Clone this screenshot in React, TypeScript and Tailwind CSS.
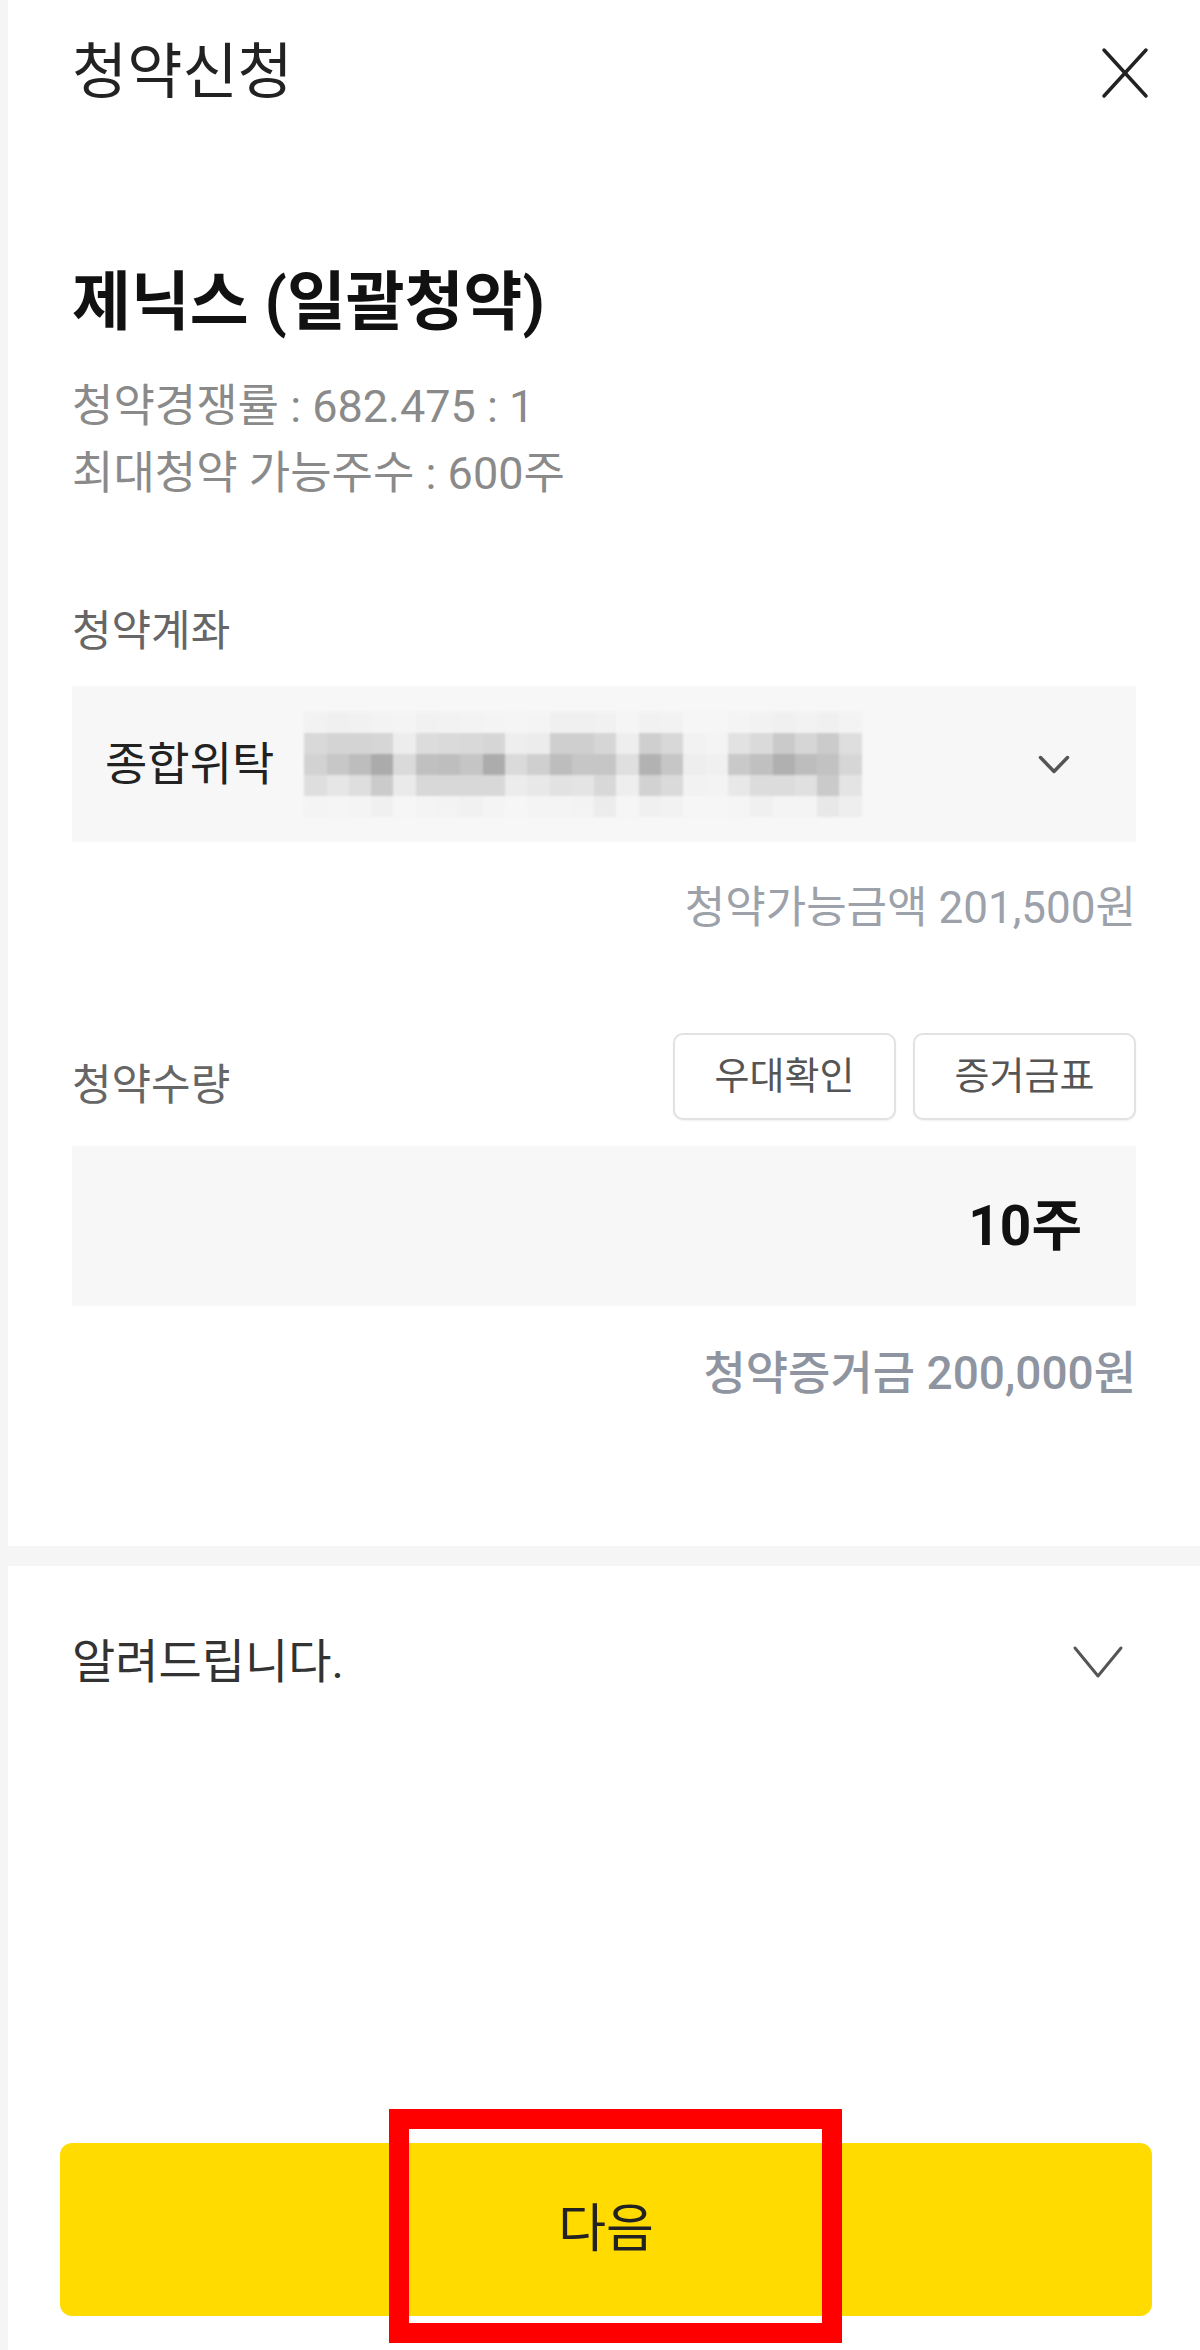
import React from "react";

// pixelated (masked) account number, gray levels per cell
const maskRows: number[][] = [
  [242, 240, 241, 243, 244, 241, 242, 243, 244, 245, 244, 240, 240, 241, 245, 241, 242, 246, 246, 244, 242, 240, 242, 240, 243],
  [217, 212, 212, 214, 237, 220, 218, 217, 214, 238, 236, 207, 207, 214, 238, 207, 216, 242, 244, 226, 218, 202, 214, 203, 222],
  [210, 199, 189, 171, 218, 192, 190, 197, 172, 218, 207, 189, 198, 198, 223, 178, 198, 238, 240, 201, 192, 176, 189, 194, 214],
  [222, 230, 222, 203, 234, 216, 216, 216, 216, 236, 232, 226, 228, 216, 238, 210, 218, 242, 243, 232, 220, 220, 224, 202, 228],
  [244, 245, 244, 240, 246, 244, 243, 241, 244, 246, 244, 244, 243, 236, 246, 240, 242, 246, 246, 245, 240, 244, 244, 232, 238],
];

const Chevron = ({ w, h, stroke }: { w: number; h: number; stroke: number }) => (
  <svg width={w} height={h} viewBox={`0 0 ${w} ${h}`} fill="none">
    <polyline
      points={`${stroke},${stroke} ${w / 2},${h - stroke} ${w - stroke},${stroke}`}
      stroke="#555"
      strokeWidth={stroke}
      strokeLinecap="round"
      strokeLinejoin="round"
    />
  </svg>
);

const MaskedAccount: React.FC = () => (
  <div className="flex flex-col blur-[1px]">
    {maskRows.map((row, i) => (
      <div key={i} className="flex">
        {row.map((g, j) => (
          <div
            key={j}
            className="w-[22.3px] h-[21px]"
            style={{ backgroundColor: `rgb(${g},${g},${g})` }}
          />
        ))}
      </div>
    ))}
  </div>
);

const App: React.FC = () => {
  return (
    <div className="relative w-[1200px] h-[2350px] flex bg-white font-['Roboto','Noto_Sans_CJK_KR',sans-serif] overflow-hidden">
      <div className="w-2 bg-[#f5f5f5]" />
      <div className="flex-1 flex flex-col">
        {/* header */}
        <div className="h-[146px] flex items-center justify-between pl-16 pr-[51px]">
          <h1 className="text-[60px] leading-none text-[#222]">청약신청</h1>
          <svg width="48" height="52" viewBox="0 0 48 52" fill="none">
            <line x1="3" y1="3" x2="45" y2="49" stroke="#222" strokeWidth="3.5" strokeLinecap="round" />
            <line x1="45" y1="3" x2="3" y2="49" stroke="#222" strokeWidth="3.5" strokeLinecap="round" />
          </svg>
        </div>

        <div className="px-16 flex flex-col">
          <h2 className="mt-[117px] text-[64px] leading-[80px] font-bold text-[#111]">
            제닉스 (일괄청약)
          </h2>
          <div className="mt-[30px] text-[45px] leading-[67px] text-[#8a8a8a]">
            <p>청약경쟁률 : 682.475 : 1</p>
            <p>최대청약 가능주수 : 600주</p>
          </div>

          <p className="mt-[99px] text-[43px] leading-[50px] text-[#666]">청약계좌</p>
          <div className="mt-[30px] h-[156px] bg-[#f7f7f7] flex items-center pl-[33px] pr-[65px]">
            <span className="text-[46px] text-[#222]">종합위탁</span>
            <div className="ml-[30px]">
              <MaskedAccount />
            </div>
            <div className="ml-auto">
              <Chevron w={34} h={21} stroke={3.5} />
            </div>
          </div>
          <p className="mt-[41px] text-right text-[44px] leading-[50px] text-[#9ca1aa]">
            청약가능금액 201,500원
          </p>

          <div className="mt-[100px] flex items-center">
            <p className="pt-4 text-[43px] leading-[50px] text-[#666]">청약수량</p>
            <div className="ml-auto flex gap-[17px]">
              <button className="w-[223px] h-[87px] rounded-[10px] border-2 border-[#e2e2e2] bg-white text-[38px] text-[#555] shadow-[0_1px_2px_rgba(0,0,0,0.06)]">
                우대확인
              </button>
              <button className="w-[223px] h-[87px] rounded-[10px] border-2 border-[#e2e2e2] bg-white text-[38px] text-[#555] shadow-[0_1px_2px_rgba(0,0,0,0.06)]">
                증거금표
              </button>
            </div>
          </div>
          <div className="mt-[26px] h-[160px] bg-[#f7f7f7] flex items-center justify-end pr-[54px]">
            <span className="text-[55px] font-bold text-[#111]">10주</span>
          </div>
          <p className="mt-[42px] text-right text-[46px] leading-[50px] font-medium text-[#8f95a0]">
            청약증거금 200,000원
          </p>
        </div>

        <div className="mt-[148px] h-5 bg-[#f5f5f5]" />

        <div className="mt-[46px] h-[100px] flex items-center justify-between pl-16 pr-[76px]">
          <p className="text-[47px] text-[#333]">알려드립니다.</p>
          <Chevron w={52} h={34} stroke={3} />
        </div>

        <div className="flex-1" />

        <div className="pl-[52px] pr-[48px] pb-[34px]">
          <button className="w-full h-[173px] rounded-[12px] bg-[#ffdb00] text-[52px] text-[#222]">
            다음
          </button>
        </div>
      </div>

      {/* red highlight annotation over the button */}
      <div className="absolute left-[389px] top-[2109px] w-[453px] h-[234px] border-[20px] border-[#ff0000]" />
    </div>
  );
};

export default App;
